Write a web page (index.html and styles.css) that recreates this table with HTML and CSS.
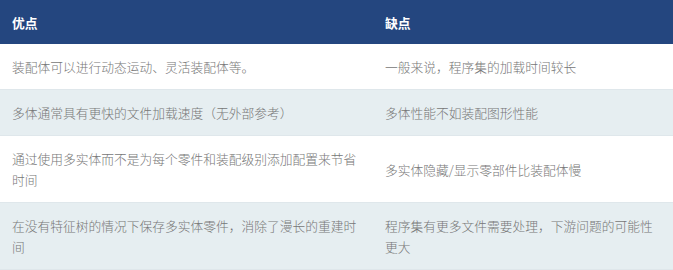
FILE: index.html
```html
<!DOCTYPE html>
<html lang="zh-CN">
<head>
<meta charset="utf-8">
<link rel="stylesheet" href="styles.css">
</head>
<body>
<table class="cmp">
  <colgroup><col class="c1"><col class="c2"></colgroup>
  <thead>
    <tr><th>优点</th><th>缺点</th></tr>
  </thead>
  <tbody>
    <tr><td>装配体可以进行动态运动、灵活装配体等。</td><td>一般来说，程序集的加载时间较长</td></tr>
    <tr class="alt"><td>多体通常具有更快的文件加载速度（无外部参考）</td><td>多体性能不如装配图形性能</td></tr>
    <tr><td>通过使用多实体而不是为每个零件和装配级别添加配置来节省时间</td><td>多实体隐藏/显示零部件比装配体慢</td></tr>
    <tr class="alt"><td>在没有特征树的情况下保存多实体零件，消除了漫长的重建时间</td><td>程序集有更多文件需要处理，下游问题的可能性更大</td></tr>
  </tbody>
</table>
</body>
</html>
```
FILE: styles.css
```css
html, body {
  margin: 0;
  padding: 0;
  background: #e6eef1;
}
.cmp {
  width: 673px;
  border-collapse: collapse;
  table-layout: fixed;
  font-family: "Noto Sans CJK SC", "Noto Sans", sans-serif;
  font-size: 12.75px;
  line-height: 21px;
}
.c1 { width: 373px; }
.c2 { width: 300px; }
.cmp th {
  background: #24467f;
  color: #ffffff;
  font-weight: 700;
  text-align: left;
  height: 44px;
  padding: 0 12px;
  box-sizing: border-box;
}
.cmp td {
  padding: 12px 12px;
  color: #777777;
  font-weight: 300;
  vertical-align: middle;
  border-bottom: 1px solid #dfe7eb;
  background: #ffffff;
}
.cmp tr.alt td {
  background: #e6eef1;
}
```
